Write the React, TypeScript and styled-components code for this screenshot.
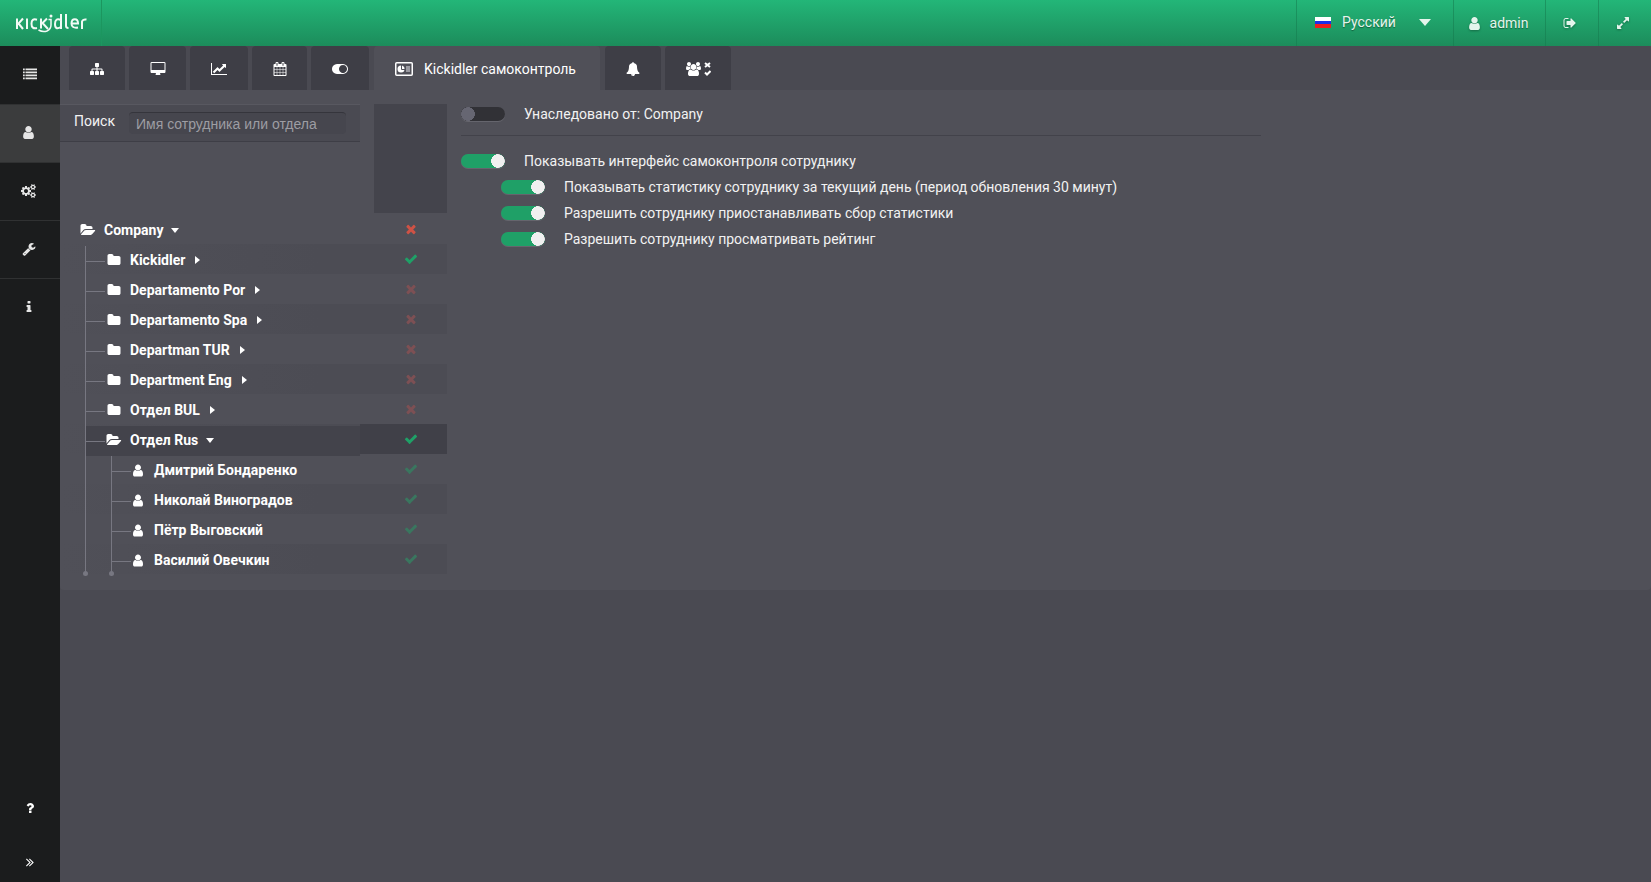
import React, { useState } from "react";
import styled, { createGlobalStyle, css } from "styled-components";

const GlobalStyle = createGlobalStyle`
  *, *::before, *::after { box-sizing: border-box; }
  html, body, #root { height: 100%; }
  body {
    margin: 0;
    background: #4a4a52;
    color: #f2f2f2;
    font-family: Roboto, "Liberation Sans", sans-serif;
    font-size: 14px;
    line-height: 20px;
  }
  button, input, select { font: inherit; color: inherit; }
  button { background: none; border: 0; padding: 0; cursor: pointer; }
  ul { list-style: none; margin: 0; padding: 0; }
`;

const PATHS = {
  user: "M1536 1399q0 109-62.5 187t-150.5 78h-854q-88 0-150.5-78t-62.5-187q0-85 8.5-160.5t31.5-152 58.5-131 94-89 134.5-34.5q131 128 313 128t313-128q76 0 134.5 34.5t94 89 58.5 131 31.5 152 8.5 160.5zm-256-887q0 159-112.5 271.5t-271.5 112.5-271.5-112.5-112.5-271.5 112.5-271.5 271.5-112.5 271.5 112.5 112.5 271.5z",
  sitemap: "M1792 1248v320q0 40-28 68t-68 28h-320q-40 0-68-28t-28-68v-320q0-40 28-68t68-28h96v-192h-512v192h96q40 0 68 28t28 68v320q0 40-28 68t-68 28h-320q-40 0-68-28t-28-68v-320q0-40 28-68t68-28h96v-192h-512v192h96q40 0 68 28t28 68v320q0 40-28 68t-68 28h-320q-40 0-68-28t-28-68v-320q0-40 28-68t68-28h96v-192q0-52 38-90t90-38h512v-192h-96q-40 0-68-28t-28-68v-320q0-40 28-68t68-28h320q40 0 68 28t28 68v320q0 40-28 68t-68 28h-96v192h512q52 0 90 38t38 90v192h96q40 0 68 28t28 68z",
  chart: "M2048 1536v128h-2048v-1536h128v1408h1920zm-128-1248v435q0 21-19.5 29.5t-35.5-7.5l-121-121-633 633q-10 10-23 10t-23-10l-233-233-416 416-192-192 585-585q10-10 23-10t23 10l233 233 464-464-121-121q-16-16-7.5-35.5t29.5-19.5h435q14 0 23 9t9 23z",
  calendar: "M192 1664h288v-288h-288v288zm352 0h320v-288h-320v288zm-352-352h288v-320h-288v320zm352 0h320v-320h-320v320zm-352-384h288v-288h-288v288zm736 736h320v-288h-320v288zm-384-736h320v-288h-320v288zm768 736h288v-288h-288v288zm-384-352h320v-320h-320v320zm-352-864v-288q0-13-9.5-22.5t-22.5-9.5h-64q-13 0-22.5 9.5t-9.5 22.5v288q0 13 9.5 22.5t22.5 9.5h64q13 0 22.5-9.5t9.5-22.5zm736 864h288v-320h-288v320zm-384-384h320v-288h-320v288zm384 0h288v-288h-288v288zm32-480v-288q0-13-9.5-22.5t-22.5-9.5h-64q-13 0-22.5 9.5t-9.5 22.5v288q0 13 9.5 22.5t22.5 9.5h64q13 0 22.5-9.5t9.5-22.5zm384-64v1280q0 52-38 90t-90 38h-1408q-52 0-90-38t-38-90v-1280q0-52 38-90t90-38h128v-96q0-66 47-113t113-47h64q66 0 113 47t47 113v96h384v-96q0-66 47-113t113-47h64q66 0 113 47t47 113v96h128q52 0 90 38t38 90z",
  times: "M1490 1322q0 40-28 68l-136 136q-28 28-68 28t-68-28l-294-294-294 294q-28 28-68 28t-68-28l-136-136q-28-28-28-68t28-68l294-294-294-294q-28-28-28-68t28-68l136-136q28-28 68-28t68 28l294 294 294-294q28-28 68-28t68 28l136 136q28 28 28 68t-28 68l-294 294 294 294q28 28 28 68z",
  check: "M1671 566q0 40-28 68l-724 724-136 136q-28 28-68 28t-68-28l-136-136-362-362q-28-28-28-68t28-68l136-136q28-28 68-28t68 28l294 295 656-657q28-28 68-28t68 28l136 136q28 28 28 68z",
  folder: "M1728 608v704q0 92-66 158t-158 66h-1216q-92 0-158-66t-66-158v-960q0-92 66-158t158-66h320q92 0 158 66t66 158v32h672q92 0 158 66t66 158z",
  folderOpen: "M1943 952q0 31-31 66l-336 396q-43 51-120.5 86.5t-143.5 35.5h-1088q-34 0-60.5-13t-26.5-43q0-31 31-66l336-396q43-51 120.5-86.5t143.5-35.5h1088q34 0 60.5 13t26.5 43zm-343-344v160h-832q-94 0-197 47.5t-164 119.5l-337 396-5 6q0-4-.5-12.5t-.5-12.5v-960q0-92 66-158t158-66h320q92 0 158 66t66 158v32h544q92 0 158 66t66 158z",
  wrench: "M448 1472q0-26-19-45t-45-19-45 19-19 45 19 45 45 19 45-19 19-45zm644-420l-682 682q-37 37-90 37-52 0-91-37l-106-108q-38-36-38-90 0-53 38-91l681-681q39 98 114.5 173.5t173.5 114.5zm634-435q0 39-23 106-47 134-164.5 217.5t-258.5 83.5q-185 0-316.5-131.5t-131.5-316.5 131.5-316.5 316.5-131.5q58 0 121.5 16.5t107.5 46.5q16 11 16 28t-16 28l-293 169v224l193 107q5-3 79-48.5t135.5-81 70.5-35.5q15 0 23.5 10t8.5 25z",
  info: "M1216 1344v128q0 26-19 45t-45 19h-512q-26 0-45-19t-19-45v-128q0-26 19-45t45-19h64v-384h-64q-26 0-45-19t-19-45v-128q0-26 19-45t45-19h384q26 0 45 19t19 45v576h64q26 0 45 19t19 45zm-128-1152v192q0 26-19 45t-45 19h-256q-26 0-45-19t-19-45v-192q0-26 19-45t45-19h256q26 0 45 19t19 45z",
  question: "M1088 1256v240q0 16-12 28t-28 12h-240q-16 0-28-12t-12-28v-240q0-16 12-28t28-12h240q16 0 28 12t12 28zm316-600q0 54-15.5 101t-35 76.5-55 59.5-57.5 43.5-61 35.5q-41 23-68.5 65t-27.5 67q0 17-12 32.5t-28 15.5h-240q-15 0-25.5-18.5t-10.5-37.5v-45q0-83 65-156.5t143-108.5q59-27 84-56t25-76q0-42-46.5-74t-107.5-32q-65 0-108 29-35 25-107 115-13 16-31 16-12 0-25-8l-164-125q-13-10-15.5-25t5.5-28q160-266 464-266 80 0 161 31t146 83 106 127.5 41 158.5z",
  angles: "M979 960q0 13-10 23l-466 466q-10 10-23 10t-23-10l-50-50q-10-10-10-23t10-23l393-393-393-393q-10-10-10-23t10-23l50-50q10-10 23-10t23 10l466 466q10 10 10 23zm384 0q0 13-10 23l-466 466q-10 10-23 10t-23-10l-50-50q-10-10-10-23t10-23l393-393-393-393q-10-10-10-23t10-23l50-50q10-10 23-10t23 10l466 466q10 10 10 23z",
  signOut: "M704 1440q0 4 1 20t.5 26.5-3 23.5-10 19.5-20.5 6.5h-320q-119 0-203.5-84.5t-84.5-203.5v-704q0-119 84.5-203.5t203.5-84.5h320q13 0 22.5 9.5t9.5 22.5q0 4 1 20t.5 26.5-3 23.5-10 19.5-20.5 6.5h-320q-66 0-113 47t-47 113v704q0 66 47 113t113 47h312l11.5 1 11.5 3 8 5.5 7 9 2 13.5zm928-544q0 26-19 45l-544 544q-19 19-45 19t-45-19-19-45v-288h-448q-26 0-45-19t-19-45v-384q0-26 19-45t45-19h448v-288q0-26 19-45t45-19 45 19l544 544q19 19 19 45z",
  expand: "M883 1056q0 13-10 23l-332 332 144 144q19 19 19 45t-19 45-45 19h-448q-26 0-45-19t-19-45v-448q0-26 19-45t45-19 45 19l144 144 332-332q10-10 23-10t23 10l114 114q10 10 10 23zm781-864v448q0 26-19 45t-45 19-45-19l-144-144-332 332q-10 10-23 10t-23-10l-114-114q-10-10-10-23t10-23l332-332-144-144q-19-19-19-45t19-45 45-19h448q26 0 45 19t19 45z",
  desktop: "M1856 992v-832q0-13-9.5-22.5t-22.5-9.5h-1600q-13 0-22.5 9.5t-9.5 22.5v832q0 13 9.5 22.5t22.5 9.5h1600q13 0 22.5-9.5t9.5-22.5zm128-832v1088q0 66-47 113t-113 47h-544q0 37 16 77.5t32 71 16 43.5q0 26-19 45t-45 19h-512q-26 0-45-19t-19-45q0-14 16-44t32-70 16-78h-544q-66 0-113-47t-47-113v-1088q0-66 47-113t113-47h1600q66 0 113 47t47 113z",
  toggle: "M0 896q0-130 51-248.5t136.5-204 204-136.5 248.5-51h768q130 0 248.5 51t204 136.5 136.5 204 51 248.5-51 248.5-136.5 204-204 136.5-248.5 51h-768q-130 0-248.5-51t-204-136.5-136.5-204-51-248.5zm1408 512q104 0 198.5-40.5t163.5-109.5 109.5-163.5 40.5-198.5-40.5-198.5-109.5-163.5-163.5-109.5-198.5-40.5-198.5 40.5-163.5 109.5-109.5 163.5-40.5 198.5 40.5 198.5 109.5 163.5 163.5 109.5 198.5 40.5z",
  bell: "M912 1696q0-16-16-16-59 0-101.5-42.5t-42.5-101.5q0-16-16-16t-16 16q0 73 51.5 124.5t124.5 51.5q16 0 16-16zm816-288q0 52-38 90t-90 38h-448q0 106-75 181t-181 75-181-75-75-181h-448q-52 0-90-38t-38-90q50-42 91-88t85-119.5 74.5-158.5 50-206 19.5-260q0-152 117-282.5t307-158.5q-8-19-8-39 0-40 28-68t68-28 68 28 28 68q0 20-8 39 190 28 307 158.5t117 282.5q0 139 19.5 260t50 206 74.5 158.5 85 119.5 91 88z",
  list: "M0 192h224v224h-224zM320 192h1472v224h-1472zM0 576h224v224h-224zM320 576h1472v224h-1472zM0 960h224v224h-224zM320 960h1472v224h-1472zM0 1344h224v224h-224zM320 1344h1472v224h-1472z",
  cogs: "M896 896q0-106-75-181t-181-75-181 75-75 181 75 181 181 75 181-75 75-181zm768 512q0-52-38-90t-90-38-90 38-38 90q0 53 37.5 90.5t90.5 37.5 90.5-37.5 37.5-90.5zm0-1024q0-52-38-90t-90-38-90 38-38 90q0 53 37.5 90.5t90.5 37.5 90.5-37.5 37.5-90.5zm-384 421v185q0 10-7 19.5t-16 10.5l-155 24q-11 35-32 76 34 48 90 115 7 11 7 20 0 12-7 19-23 30-82.5 89.5t-78.5 59.5q-11 0-21-7l-115-90q-37 19-77 31-11 108-23 155-7 24-30 24h-186q-11 0-20-7.5t-10-17.5l-23-153q-34-10-75-31l-118 89q-7 7-20 7-11 0-21-8-144-133-144-160 0-9 7-19 10-14 41-53t47-61q-23-44-35-82l-152-24q-10-1-17-9.5t-7-19.5v-185q0-10 7-19.5t16-10.5l155-24q11-35 32-76-34-48-90-115-7-11-7-20 0-12 7-20 22-30 82-89t79-59q11 0 21 7l115 90q34-18 77-32 11-108 23-154 7-24 30-24h186q11 0 20 7.5t10 17.5l23 153q34 10 75 31l118-89q8-7 20-7 11 0 21 8 144 133 144 160 0 8-7 19-12 16-42 54t-45 60q23 48 34 82l152 23q10 2 17 10.5t7 19.5zm640 533v140q0 16-149 31-12 27-30 52 51 113 51 138 0 4-4 7-122 71-124 71-8 0-46-47t-52-68q-20 2-30 2t-30-2q-14 21-52 68t-46 47q-2 0-124-71-4-3-4-7 0-25 51-138-18-25-30-52-149-15-149-31v-140q0-16 149-31 13-29 30-52-51-113-51-138 0-4 4-7 4-2 35-20t59-34 30-16q8 0 46 46.5t52 67.5q20-2 30-2t30 2q51-71 92-112l6-2q4 0 124 70 4 3 4 7 0 25-51 138 17 23 30 52 149 15 149 31zm0-1024v140q0 16-149 31-12 27-30 52 51 113 51 138 0 4-4 7-122 71-124 71-8 0-46-47t-52-68q-20 2-30 2t-30-2q-14 21-52 68t-46 47q-2 0-124-71-4-3-4-7 0-25 51-138-18-25-30-52-149-15-149-31v-140q0-16 149-31 13-29 30-52-51-113-51-138 0-4 4-7 4-2 35-20t59-34 30-16q8 0 46 46.5t52 67.5q20-2 30-2t30 2q51-71 92-112l6-2q4 0 124 70 4 3 4 7 0 25-51 138 17 23 30 52 149 15 149 31z",
  group: "M593 896q-162 5-265 128h-134q-82 0-138-40.5t-56-118.5q0-353 124-353 6 0 43.5 21t97.5 42.5 119 21.5q67 0 133-23-5 37-5 66 0 139 81 256zm1071 637q0 120-73 189.500t-194 69.5h-874q-121 0-194-69.5t-73-189.500q0-53 3.5-103.5t14-109 26.5-108.5 43-97.5 62-81 85.5-53.5 111.500-20q10 0 43 21.5t73 48 107 48 135 21.5 135-21.5 107-48 73-48 43-21.5q61 0 111.5 20t85.5 53.5 62 81 43 97.5 26.5 108.5 14 109 3.5 103.5zm-1024-1277q0 106-75 181t-181 75-181-75-75-181 75-181 181-75 181 75 75 181zm704 384q0 159-112.5 271.5t-271.5 112.5-271.5-112.5-112.5-271.5 112.5-271.5 271.5-112.5 271.5 112.5 112.5 271.5zm576 225q0 78-56 118.5t-138 40.5h-134q-103-123-265-128 81-117 81-256 0-29-5-66 66 23 133 23 59 0 119-21.5t97.5-42.5 43.5-21q124 0 124 353zm-128-609q0 106-75 181t-181 75-181-75-75-181 75-181 181-75 181 75 75 181z",
};
type IconName = keyof typeof PATHS;
const WIDE: IconName[] = ["chart", "desktop", "toggle", "folderOpen", "cogs", "group"];

const Icon = ({ name, size = 14 }: { name: IconName; size?: number }) => {
  const vb = WIDE.includes(name) ? 2048 : 1792;
  return (
    <svg width={Math.round((size * vb) / 1792)} height={size} viewBox={`0 0 ${vb} 1792`} fill="currentColor" aria-hidden="true">
      <path d={PATHS[name]} />
    </svg>
  );
};

const Page = styled.div`
  min-height: 100%;
  display: flex;
  flex-direction: column;
`;

const Header = styled.header`
  height: 46px;
  display: flex;
  background: linear-gradient(#23b678, #1c8c5b);
  color: #e4f5ec;
  text-shadow: 0 1px 1px rgba(0, 0, 0, 0.4);
`;
const Brand = styled.a`
  width: 102px;
  padding: 11px 0 0 15px;
  border-right: 1px solid #1c965f;
  svg { display: block; }
`;
const HeaderTools = styled.div`
  margin-left: auto;
  display: flex;
`;
const headerCell = css`
  display: flex;
  align-items: center;
  justify-content: center;
  border-left: 1px solid rgba(20, 120, 75, 0.5);
`;
const LanguageCell = styled.label`
  ${headerCell}
  width: 157px;
  padding: 0 22px 2px 18px;
`;
const LanguageSelect = styled.select`
  appearance: none;
  flex: 1;
  min-width: 0;
  padding: 0 0 0 11px;
  border: 0;
  background: none;
  text-shadow: inherit;
  option { color: #222; }
`;
const HeaderButton = styled.button<{ $width: number }>`
  ${headerCell}
  width: ${(p) => p.$width}px;
  padding-right: 4px;
  gap: 8px;
  text-shadow: inherit;
  svg { filter: drop-shadow(0 1px 1px rgba(0, 0, 0, 0.3)); }
`;

const Body = styled.div`
  flex: 1;
  display: flex;
`;
const Sidebar = styled.nav`
  width: 60px;
  flex: none;
  display: flex;
  flex-direction: column;
  background: #1b1c1d;
`;
const SideButton = styled.button<{ $active?: boolean; $centered?: boolean }>`
  height: 58px;
  padding: 0 ${(p) => (p.$centered ? 0 : 3)}px 2px 0;
  display: flex;
  align-items: center;
  justify-content: center;
  color: #e6e6e6;
  background: ${(p) => (p.$active ? "#3b3c3d" : "none")};
  & + & { border-top: 1px solid #303132; }
`;
const SideFooter = styled.div`
  margin-top: auto;
  display: flex;
  flex-direction: column;
`;
const FooterButton = styled.button<{ $height: number }>`
  height: ${(p) => p.$height}px;
  display: flex;
  align-items: center;
  justify-content: center;
  color: #fff;
`;

const Main = styled.main`
  flex: 1;
  min-width: 0;
`;
const TabBar = styled.div`
  height: 44px;
  display: flex;
  padding-left: 9px;
`;
const Tab = styled.button<{ $width: number; $active?: boolean }>`
  width: ${(p) => p.$width}px;
  margin-right: ${(p) => (p.$active ? 5 : 4)}px;
  padding-top: 2px;
  display: flex;
  align-items: center;
  justify-content: center;
  gap: 2px;
  border-radius: 4px 4px 0 0;
  color: #fff;
  background: ${(p) => (p.$active ? "#505058" : "#3e3e46")};
  ${(p) => p.$active && css`margin-left: 1px; gap: 11px; padding-right: 3px;`}
`;
const Panel = styled.section`
  min-height: 500px;
  display: flex;
  align-items: flex-start;
  padding: 14px 0 16px;
  background: #505058;
  border-radius: 0 0 4px 4px;
`;

const TreeArea = styled.div`
  width: 387px;
  flex: none;
`;
const TreeTop = styled.div`
  height: 110px;
  display: flex;
  justify-content: space-between;
  align-items: flex-start;
`;
const SearchBox = styled.label`
  width: 300px;
  height: 38px;
  display: flex;
  align-items: flex-start;
  padding: 6px 14px 0;
  background: #4a4a52;
  border-top: 1px solid #585860;
  border-bottom: 1px solid #3e3e46;
`;
const SearchInput = styled.input`
  width: 217px;
  height: 22px;
  margin: 1px 0 0 auto;
  padding: 0 7px;
  border: 0;
  border-top: 1px solid #35353c;
  border-radius: 4px;
  background: #46464e;
  font-family: "Liberation Sans", Arial, sans-serif;
  &::placeholder { color: #9d9da3; opacity: 1; }
`;
const ColumnHead = styled.div`
  width: 73px;
  height: 109px;
  background: #44444c;
`;

const Tree = styled.ul`
  font-weight: 700;
  color: #fff;
`;
const TreeRow = styled.li<{ $striped: boolean }>`
  display: flex;
  height: 30px;
  background: ${(p) => (p.$striped ? "linear-gradient(90deg, rgba(76,76,84,0), #4c4c54 260px)" : "none")};
`;
const Guide = styled.span<{ $last?: boolean; $branch?: boolean }>`
  position: relative;
  width: ${(p) => (p.$branch ? 20 : 26)}px;
  flex: none;
  background: ${(p) => (p.$branch ? "linear-gradient(#777781, #777781) 0 15px / 20px 1px no-repeat" : "none")};
  &::before {
    content: "";
    position: absolute;
    left: 0;
    top: 0;
    bottom: 0;
    width: 1px;
    background: #777781;
  }
  ${(p) => p.$last && css`
    &::after {
      content: "";
      position: absolute;
      left: -2px;
      bottom: 0;
      width: 5px;
      height: 5px;
      border-radius: 50%;
      background: #777781;
    }
  `}
`;
const NameCell = styled.div<{ $root: boolean }>`
  width: 300px;
  padding: 2px 0 0 ${(p) => (p.$root ? 19 : 25)}px;
`;
const NameLine = styled.div<{ $active?: boolean }>`
  display: flex;
  height: 30px;
  background: ${(p) => (p.$active ? "#43434b" : "none")};
`;
const NameButton = styled.button`
  flex: 1;
  display: flex;
  align-items: center;
  padding-bottom: 2px;
  font-weight: 700;
  text-align: left;
`;
const IconSlot = styled.span<{ $person?: boolean }>`
  flex: none;
  width: ${(p) => (p.$person ? 14 : 18)}px;
  margin-right: ${(p) => (p.$person ? 9 : 7)}px;
  display: flex;
  justify-content: center;
`;
const Caret = styled.span<{ $open?: boolean }>`
  margin-left: ${(p) => (p.$open ? 8 : 10)}px;
  border: 4px solid transparent;
  ${(p) => p.$open
    ? css`border-top: 5px solid #fff; border-bottom-width: 0;`
    : css`border-left: 5px solid #fff; border-right-width: 0;`}
`;
const MarkCell = styled.div<{ $active?: boolean; $color: string }>`
  width: 87px;
  display: flex;
  align-items: center;
  justify-content: center;
  padding-left: 14px;
  color: ${(p) => p.$color};
  background: ${(p) => (p.$active ? "#404048" : "none")};
`;

const Settings = styled.form`
  flex: 1;
  min-width: 0;
  max-width: 800px;
  margin-left: 14px;
`;
const SettingRow = styled.label<{ $nested?: boolean }>`
  display: flex;
  align-items: center;
  height: 26px;
  padding-left: ${(p) => (p.$nested ? 40 : 0)}px;
  gap: 19px;
`;
const InheritedBlock = styled.div`
  height: 32px;
  margin-bottom: 12px;
  border-bottom: 1px solid #42424a;
  ${SettingRow} { height: 20px; }
`;
const Switch = styled.input`
  appearance: none;
  flex: none;
  width: 44px;
  height: 14px;
  margin: 0;
  border-radius: 7px;
  background: radial-gradient(circle 7px at 7px 7px, #666672 95%, transparent) #313136;
  box-shadow: 0 1px 0 #65656d;
  &:checked { background: radial-gradient(circle 7px at 37px 7px, #f0f0f0 95%, transparent) #1fa067; }
`;

type Node = { name: string; depth: 0 | 1 | 2; open?: boolean; mark: "times" | "check"; color: string; active?: boolean };
const RED_DIM = "#7d5054";
const GREEN_DIM = "#3a765f";
const nodes: Node[] = [
  { name: "Company", depth: 0, open: true, mark: "times", color: "#cf5245" },
  { name: "Kickidler", depth: 1, mark: "check", color: "#1fa067" },
  { name: "Departamento Por", depth: 1, mark: "times", color: RED_DIM },
  { name: "Departamento Spa", depth: 1, mark: "times", color: RED_DIM },
  { name: "Departman TUR", depth: 1, mark: "times", color: RED_DIM },
  { name: "Department Eng", depth: 1, mark: "times", color: RED_DIM },
  { name: "Отдел BUL", depth: 1, mark: "times", color: RED_DIM },
  { name: "Отдел Rus", depth: 1, open: true, mark: "check", color: "#1fa067", active: true },
  { name: "Дмитрий Бондаренко", depth: 2, mark: "check", color: GREEN_DIM },
  { name: "Николай Виноградов", depth: 2, mark: "check", color: GREEN_DIM },
  { name: "Пётр Выговский", depth: 2, mark: "check", color: GREEN_DIM },
  { name: "Василий Овечкин", depth: 2, mark: "check", color: GREEN_DIM },
];

const Logo = () => (
  <svg width="72" height="22" viewBox="0 0 72 22" fill="none" stroke="#f1faf5" strokeWidth="2" aria-label="Kickidler" role="img">
    <path d="M2 7.500v10.500M8 7.500L3.500 12.500L8 18M12 7.500v10.500M22 8.700Q16.500 7 16.500 12.700T22 17M26 7.500v10M32 7.500L27.500 12L33 18M46 3v15M46 9Q40 6.500 40 13T46 16M51 3v12q0 2 2.500 2M56.500 12.500h6.500Q63 8.300 59.800 8.300T56.500 12.500Q56.500 17.500 63 16.500M67 18V10.500Q68 8 71.500 8.500" />
    <path strokeWidth="1.500" d="M33.500 8.500H36V14Q36 18 32 20M23.500 19Q28 21.500 32 20" />
    <circle cx="36" cy="5" r="1.500" fill="#f1faf5" stroke="none" />
  </svg>
);
const FlagRu = () => (
  <svg width="16" height="11" viewBox="0 0 16 11" aria-hidden="true">
    <path fill="#fff" d="M0 0h16v4H0z" />
    <path fill="#1c2fe8" d="M0 4h16v3H0z" />
    <path fill="#f01d1d" d="M0 7h16v4H0z" />
  </svg>
);
const CardIcon = () => (
  <svg width="18" height="14" viewBox="0 0 18 14" aria-hidden="true">
    <rect x=".75" y=".75" width="16.500" height="12.500" rx="1" fill="none" stroke="#fff" strokeWidth="1.500" />
    <circle cx="6" cy="7" r="3.500" fill="#fff" />
    <path d="M6.500 7.500V3M6.500 7.500H10" stroke="#505058" />
    <path d="M11 4h4v6h-4z" fill="#9a9aa1" />
  </svg>
);
const RightsMarks = () => (
  <svg width="7" height="14" viewBox="0 0 7 14" fill="none" stroke="#fff" strokeWidth="2" aria-hidden="true">
    <path d="M1 1l5 4M6 1l-5 4M1 10.500l2 2L6.500 9" />
  </svg>
);

const Setting = ({ label, on, nested }: { label: string; on?: boolean; nested?: boolean }) => {
  const [checked, setChecked] = useState(!!on);
  return (
    <SettingRow $nested={nested}>
      <Switch type="checkbox" checked={checked} onChange={(e) => setChecked(e.target.checked)} />
      {label}
    </SettingRow>
  );
};

export default function App() {
  return (
    <Page>
      <GlobalStyle />
      <Header>
        <Brand href="#"><Logo /></Brand>
        <HeaderTools>
          <LanguageCell>
            <FlagRu />
            <LanguageSelect aria-label="Язык"><option>Русский</option></LanguageSelect>
            <svg width="12" height="8" viewBox="0 0 12 8" aria-hidden="true"><path fill="currentColor" d="M0 1h12L6 8z" /></svg>
          </LanguageCell>
          <HeaderButton $width={92}><Icon name="user" size={15} />admin</HeaderButton>
          <HeaderButton $width={53} aria-label="Выход"><Icon name="signOut" /></HeaderButton>
          <HeaderButton $width={53} aria-label="Во весь экран"><Icon name="expand" /></HeaderButton>
        </HeaderTools>
      </Header>
      <Body>
        <Sidebar>
          <SideButton $centered aria-label="Список"><Icon name="list" /></SideButton>
          <SideButton $active aria-label="Сотрудники"><Icon name="user" size={15} /></SideButton>
          <SideButton aria-label="Настройки"><Icon name="cogs" /></SideButton>
          <SideButton aria-label="Инструменты"><Icon name="wrench" /></SideButton>
          <SideButton aria-label="Информация"><Icon name="info" /></SideButton>
          <SideFooter>
            <FooterButton $height={68} aria-label="Помощь"><Icon name="question" /></FooterButton>
            <FooterButton $height={40} aria-label="Развернуть"><Icon name="angles" /></FooterButton>
          </SideFooter>
        </Sidebar>
        <Main>
          <TabBar role="tablist">
            <Tab $width={56} role="tab" aria-label="Структура"><Icon name="sitemap" /></Tab>
            <Tab $width={57} role="tab" aria-label="Мониторы"><Icon name="desktop" /></Tab>
            <Tab $width={58} role="tab" aria-label="Отчёты"><Icon name="chart" /></Tab>
            <Tab $width={55} role="tab" aria-label="Календарь"><Icon name="calendar" /></Tab>
            <Tab $width={58} role="tab" aria-label="Доступ"><Icon name="toggle" /></Tab>
            <Tab $width={226} $active role="tab" aria-selected="true"><CardIcon />Kickidler самоконтроль</Tab>
            <Tab $width={56} role="tab" aria-label="Уведомления"><Icon name="bell" /></Tab>
            <Tab $width={66} role="tab" aria-label="Права"><Icon name="group" /><RightsMarks /></Tab>
          </TabBar>
          <Panel>
            <TreeArea>
              <TreeTop>
                <SearchBox>
                  Поиск
                  <SearchInput type="text" placeholder="Имя сотрудника или отдела" />
                </SearchBox>
                <ColumnHead />
              </TreeTop>
              <Tree>
                {nodes.map((n, i) => {
                  const last = i === nodes.length - 1;
                  const person = n.depth === 2;
                  return (
                    <TreeRow key={n.name} $striped={i % 2 === 1}>
                      <NameCell $root={n.depth === 0}>
                        <NameLine $active={n.active}>
                          {person && <Guide $last={last} />}
                          {n.depth > 0 && <Guide $branch $last={last} />}
                          <NameButton>
                            <IconSlot $person={person}>
                              {person ? <Icon name="user" size={15} /> : <Icon name={n.open ? "folderOpen" : "folder"} />}
                            </IconSlot>
                            {n.name}
                            {!person && <Caret $open={n.open} />}
                          </NameButton>
                        </NameLine>
                      </NameCell>
                      <MarkCell $active={n.active} $color={n.color}><Icon name={n.mark} /></MarkCell>
                    </TreeRow>
                  );
                })}
              </Tree>
            </TreeArea>
            <Settings>
              <InheritedBlock><Setting label="Унаследовано от: Company" /></InheritedBlock>
              <Setting on label="Показывать интерфейс самоконтроля сотруднику" />
              <Setting on nested label="Показывать статистику сотруднику за текущий день (период обновления 30 минут)" />
              <Setting on nested label="Разрешить сотруднику приостанавливать сбор статистики" />
              <Setting on nested label="Разрешить сотруднику просматривать рейтинг" />
            </Settings>
          </Panel>
        </Main>
      </Body>
    </Page>
  );
}
